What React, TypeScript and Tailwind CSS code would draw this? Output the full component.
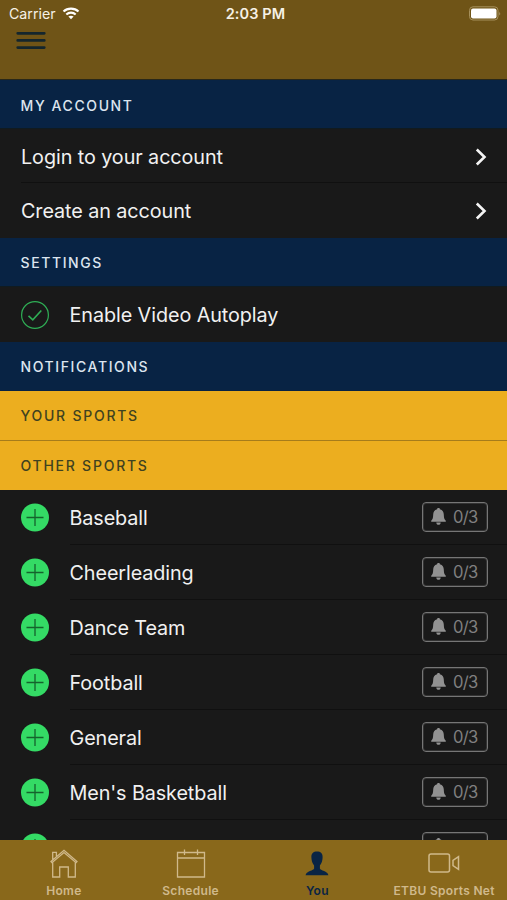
import type { ReactNode } from "react"

const sports = ["Baseball", "Cheerleading", "Dance Team", "Football", "General", "Men's Basketball", "Men's Cross Country"]

function StatusBar() {
  return (
    <div className="grid h-[27px] grid-cols-3 items-center pl-[9px] pr-[6px] leading-none text-[#f6f1e6]">
      <div className="flex items-center gap-[6px]">
        <span className="w-[47px] pt-px whitespace-nowrap text-[14.2px]">Carrier</span>
        <svg width="18" height="13" viewBox="0 0 17 13" fill="none" stroke="#fff" strokeWidth="2.1">
          <path d="M1 4.6C5 .6 12 .6 16 4.6M3.8 7.5C6.5 5 10.5 5 13.2 7.5" />
          <path d="M8.5 12.3L5.9 9.6C7.3 8.3 9.7 8.3 11.1 9.6Z" fill="#fff" stroke="none" />
        </svg>
      </div>
      <span className="pt-px pl-px text-center text-[14.5px] font-semibold tracking-[0.1px] whitespace-nowrap">2:03 PM</span>
      <svg className="justify-self-end" width="32" height="15" viewBox="0 0 32 15">
        <rect x=".5" y=".8" width="28.5" height="13.2" rx="3.5" fill="none" stroke="#a6905c" />
        <rect x="2" y="2.4" width="25.5" height="10" rx="2" fill="#fff" />
        <path d="M30.3 5.4q1.6 2 0 4Z" fill="#b19d70" />
      </svg>
    </div>
  )
}

function SectionHeader({ title, className }: { title: string; className: string }) {
  return (
    <h2 className={`flex shrink-0 items-center px-[20.5px] text-[14px] font-medium ${className}`}>
      {title}
    </h2>
  )
}

function LinkRow({ label, className }: { label: string; className: string }) {
  return (
    <div className="pl-[21px]">
      <button type="button" className={`flex w-full items-center justify-between pr-5 ${className}`}>
        <span className="pt-[2px] text-[19.8px] tracking-[-0.08px]">{label}</span>
        <svg width="12" height="18" viewBox="0 0 12 18" fill="none" stroke="#f4f4f4" strokeWidth="2.6">
          <path d="M1.8 1.5L9.5 9L1.8 16.5" />
        </svg>
      </button>
    </div>
  )
}

function Bell() {
  return (
    <svg className="mb-[2px]" width="15" height="17" viewBox="0 0 15 17" fill="#929292">
      <path d="M7.5.1C8.4.1 8.9.6 8.9 1.3C11.7 2 12.7 4.2 12.8 6.6C12.9 9.6 13.1 11.4 14.8 12.8V13.8H.2V12.8C1.9 11.4 2.1 9.6 2.2 6.6C2.3 4.2 3.3 2 6.1 1.3C6.1.6 6.6.1 7.5.1ZM5.3 14.4H9.7C9.7 15.8 8.7 16.7 7.5 16.7S5.3 15.8 5.3 14.4Z" />
    </svg>
  )
}

function SportRow({ name }: { name: string }) {
  return (
    <li className="flex h-[55px] shrink-0 pl-[21px]">
      <svg className="mt-[13px] shrink-0" width="28" height="29" viewBox="0 -.5 28 29">
        <circle cx="14" cy="14" r="14" fill="#34db65" />
        <path d="M5.5 14H22.5M14 5.5V22.5" stroke="#15632d" strokeWidth="1.3" />
      </svg>
      <div className="ml-[20.5px] flex flex-1 items-center justify-between border-b border-[#101010] pr-[19px]">
        <span className="pt-[3px] text-[19.8px] tracking-[-0.1px]">{name}</span>
        <button type="button" className="flex h-[30px] w-[66px] items-center gap-[7px] rounded-[4px] border border-[#767676] pl-[8px] text-[16.6px] text-[#808080] inset-shadow-[0_0_0_1px_#333333]">
          <Bell />
          <span className="pt-px tracking-[-0.7px]">0/3</span>
        </button>
      </div>
    </li>
  )
}

function Tab({ label, active, children }: { label: string; active?: boolean; children: ReactNode }) {
  return (
    <button type="button" className={`flex flex-col items-center ${active ? "text-[#092444]" : "text-[#d0b98b]"}`}>
      <span className="flex h-[44px] items-center pt-[2px]">{children}</span>
      <span className="pl-px text-[12px] leading-[14px] font-semibold tracking-[0.3px] whitespace-nowrap">{label}</span>
    </button>
  )
}

export default function App() {
  return (
    <div className="flex h-[900px] w-[507px] flex-col overflow-hidden bg-[#191919] font-[Inter,sans-serif] text-[#f1f1f1]">
      <header className="h-[80px] shrink-0 border-b border-[#292819] bg-[#6f5417]">
        <StatusBar />
        <svg className="ml-4 mt-[4px]" width="30" height="20" viewBox="0 0 30 20" stroke="#14262d" strokeWidth="2.7" strokeLinecap="round">
          <path d="M1.7 2.3H28.3M1.7 9.4H28.3M1.7 16.6H28.3" />
        </svg>
      </header>

      <main className="flex min-h-0 flex-1 flex-col overflow-hidden">
        <SectionHeader title="MY ACCOUNT" className="h-[49px] border-b border-[#101b20] bg-[#082344] pt-[2px] tracking-[1.6px] text-[#dce5ef]" />
        <LinkRow label="Login to your account" className="h-[54px] border-b border-[#101010] pt-[2px]" />
        <LinkRow label="Create an account" className="h-[55px]" />
        <SectionHeader title="SETTINGS" className="h-[49px] border-b border-[#101b20] bg-[#082344] tracking-[1.6px] text-[#dce5ef]" />
        <div className="flex h-[55px] shrink-0 items-center gap-[20.5px] px-[21px]">
          <svg width="28" height="28" viewBox="0 0 28 28" fill="none" stroke="#2fae55">
            <circle cx="14" cy="14" r="13.4" strokeWidth="1.2" />
            <path d="M7.5 14.8L11.8 18.8L20.3 9.5" strokeWidth="1.6" />
          </svg>
          <span className="pt-[2px] text-[19.8px] tracking-[-0.08px]">Enable Video Autoplay</span>
        </div>
        <SectionHeader title="NOTIFICATIONS" className="h-[49px] bg-[#082344] tracking-[1.6px] text-[#dce5ef]" />
        <SectionHeader title="YOUR SPORTS" className="h-[50px] border-b border-[#a67c1b] bg-[#ecae1f] tracking-[1.75px] text-[#40421f]" />
        <SectionHeader title="OTHER SPORTS" className="h-[49px] bg-[#ecae1f] tracking-[1.75px] text-[#40421f]" />
        <ul className="flex flex-col">
          {sports.map((name) => (
            <SportRow key={name} name={name} />
          ))}
        </ul>
      </main>

      <nav className="grid h-[60px] shrink-0 grid-cols-4 bg-[#89681b]">
        <Tab label="Home">
          <svg className="ml-[2px]" width="28" height="29" viewBox="0 0 28 29" fill="none" stroke="currentColor" strokeWidth="1.3">
            <path d="M1 12.5L14 1.3L27 12.5L26 13.7L14 3.6L2 13.7ZM2.7 10.4V3.3H6.4V7.2M2.7 13.6V28H9.7V18H18.3V28H25.3V13.6" />
          </svg>
        </Tab>
        <Tab label="Schedule">
          <svg className="ml-px" width="30" height="29" viewBox="0 0 30 29" fill="none" stroke="currentColor" strokeWidth="1.3">
            <path d="M1.5 3.5H28.5V28H1.5ZM1.5 9H28.5M8.5.5V6M21.5.5V6" />
          </svg>
        </Tab>
        <Tab label="You" active>
          <svg width="24" height="25" viewBox="0 0 24 25" fill="currentColor">
            <path d="M12 .6C15.7.6 17.8 2.6 17.6 6.5C17.5 9.5 16.6 12.5 14.9 14.6V17.4C15.1 19.6 23 19.8 23.4 24.2H.6C1 19.8 8.9 19.6 9.1 17.4V14.6C7.4 12.5 6.5 9.5 6.4 6.5C6.2 2.6 8.3.6 12 .6Z" />
          </svg>
        </Tab>
        <Tab label="ETBU Sports Net">
          <svg width="32" height="20" viewBox="0 0 32 20" fill="none" stroke="currentColor" strokeWidth="1.5">
            <rect x="1" y="1" width="20.5" height="18" rx="2" />
            <path d="M25 7.3L30.5 3.7V16.3L25 12.7Z" />
          </svg>
        </Tab>
      </nav>
    </div>
  )
}
